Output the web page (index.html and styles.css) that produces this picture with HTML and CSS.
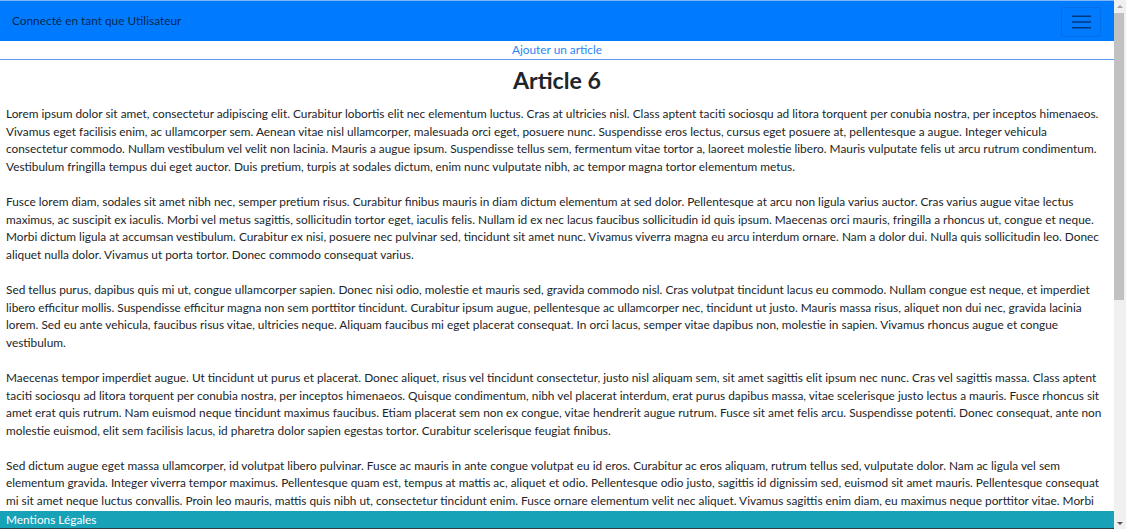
FILE: index.html
```html
<!DOCTYPE html>
<html lang="fr">
<head>
<meta charset="utf-8">
<title>Article 6</title>
<link rel="stylesheet" href="styles.css">
</head>
<body>
<div class="window">
  <div class="page">
    <nav class="navbar">
      <span class="navbar-text">Connecté en tant que Utilisateur</span>
      <button class="toggler" type="button" aria-label="Menu">
        <svg width="19" height="14" viewBox="0 0 19 14"><path d="M0 1.2H19M0 7H19M0 12.8H19" stroke="#00367a" stroke-width="1.4" fill="none"/></svg>
      </button>
    </nav>
    <div class="addbar"><a class="addlink" href="#">Ajouter un article</a></div>
    <main class="content">
      <h1 class="title">Article 6</h1>
      <p>Lorem ipsum dolor sit amet, consectetur adipiscing elit. Curabitur lobortis elit nec elementum luctus. Cras at ultricies nisl. Class aptent taciti sociosqu ad litora torquent per conubia nostra, per inceptos himenaeos.<br>Vivamus eget facilisis enim, ac ullamcorper sem. Aenean vitae nisl ullamcorper, malesuada orci eget, posuere nunc. Suspendisse eros lectus, cursus eget posuere at, pellentesque a augue. Integer vehicula<br>consectetur commodo. Nullam vestibulum vel velit non lacinia. Mauris a augue ipsum. Suspendisse tellus sem, fermentum vitae tortor a, laoreet molestie libero. Mauris vulputate felis ut arcu rutrum condimentum.<br>Vestibulum fringilla tempus dui eget auctor. Duis pretium, turpis at sodales dictum, enim nunc vulputate nibh, ac tempor magna tortor elementum metus.</p>
      <p>Fusce lorem diam, sodales sit amet nibh nec, semper pretium risus. Curabitur finibus mauris in diam dictum elementum at sed dolor. Pellentesque at arcu non ligula varius auctor. Cras varius augue vitae lectus<br>maximus, ac suscipit ex iaculis. Morbi vel metus sagittis, sollicitudin tortor eget, iaculis felis. Nullam id ex nec lacus faucibus sollicitudin id quis ipsum. Maecenas orci mauris, fringilla a rhoncus ut, congue et neque.<br>Morbi dictum ligula at accumsan vestibulum. Curabitur ex nisi, posuere nec pulvinar sed, tincidunt sit amet nunc. Vivamus viverra magna eu arcu interdum ornare. Nam a dolor dui. Nulla quis sollicitudin leo. Donec<br>aliquet nulla dolor. Vivamus ut porta tortor. Donec commodo consequat varius.</p>
      <p>Sed tellus purus, dapibus quis mi ut, congue ullamcorper sapien. Donec nisi odio, molestie et mauris sed, gravida commodo nisl. Cras volutpat tincidunt lacus eu commodo. Nullam congue est neque, et imperdiet<br>libero efficitur mollis. Suspendisse efficitur magna non sem porttitor tincidunt. Curabitur ipsum augue, pellentesque ac ullamcorper nec, tincidunt ut justo. Mauris massa risus, aliquet non dui nec, gravida lacinia<br>lorem. Sed eu ante vehicula, faucibus risus vitae, ultricies neque. Aliquam faucibus mi eget placerat consequat. In orci lacus, semper vitae dapibus non, molestie in sapien. Vivamus rhoncus augue et congue<br>vestibulum.</p>
      <p>Maecenas tempor imperdiet augue. Ut tincidunt ut purus et placerat. Donec aliquet, risus vel tincidunt consectetur, justo nisl aliquam sem, sit amet sagittis elit ipsum nec nunc. Cras vel sagittis massa. Class aptent<br>taciti sociosqu ad litora torquent per conubia nostra, per inceptos himenaeos. Quisque condimentum, nibh vel placerat interdum, erat purus dapibus massa, vitae scelerisque justo lectus a mauris. Fusce rhoncus sit<br>amet erat quis rutrum. Nam euismod neque tincidunt maximus faucibus. Etiam placerat sem non ex congue, vitae hendrerit augue rutrum. Fusce sit amet felis arcu. Suspendisse potenti. Donec consequat, ante non<br>molestie euismod, elit sem facilisis lacus, id pharetra dolor sapien egestas tortor. Curabitur scelerisque feugiat finibus.</p>
      <p>Sed dictum augue eget massa ullamcorper, id volutpat libero pulvinar. Fusce ac mauris in ante congue volutpat eu id eros. Curabitur ac eros aliquam, rutrum tellus sed, vulputate dolor. Nam ac ligula vel sem<br>elementum gravida. Integer viverra tempor maximus. Pellentesque quam est, tempus at mattis ac, aliquet et odio. Pellentesque odio justo, sagittis id dignissim sed, euismod sit amet mauris. Pellentesque consequat<br>mi sit amet neque luctus convallis. Proin leo mauris, mattis quis nibh ut, consectetur tincidunt enim. Fusce ornare elementum velit nec aliquet. Vivamus sagittis enim diam, eu maximus neque porttitor vitae. Morbi</p>
    </main>
    <footer class="footer">Mentions Légales</footer>
  </div>
  <div class="scrollbar" aria-hidden="true">
    <div class="arrow arrow-up"></div>
    <div class="track"><div class="thumb"></div></div>
    <div class="arrow arrow-down"></div>
  </div>
</div>
</body>
</html>
```
FILE: styles.css
```css
* { box-sizing: border-box; }
html, body { margin: 0; padding: 0; height: 100%; overflow: hidden; background: #fff; }
body {
  font-family: "Lato", "Segoe UI", "Liberation Sans", sans-serif;
  font-size: 11.85px;
  line-height: 17.6px;
  color: #212529;
}
.window { display: flex; height: 529px; width: 1126px; }
.page { flex: 1; display: flex; flex-direction: column; min-width: 0; }

.navbar {
  height: 41px;
  flex: none;
  background: #007bff;
  border-top: 1px solid #7fb6f7;
  display: flex;
  align-items: center;
  justify-content: space-between;
  padding: 0 13px 0 12px;
}
.navbar-text { color: rgba(0, 0, 0, 0.72); }
.toggler {
  width: 40px;
  height: 30px;
  margin-top: 1px;
  padding: 0;
  background: transparent;
  border: 1px solid rgba(0, 0, 0, 0.1);
  border-radius: 3px;
  display: flex;
  align-items: center;
  justify-content: center;
}
.toggler svg { display: block; margin-left: 1px; }

.addbar {
  flex: none;
  height: 19px;
  border-bottom: 1px solid #5a9bf0;
  text-align: center;
  line-height: 18px;
}
.addlink { color: #2b86f5; text-decoration: none; }

.content { flex: 1; overflow: hidden; padding: 0 6px; }
.title {
  margin: 6px 0 11px;
  text-align: center;
  font-size: 23.2px;
  line-height: 28px;
  font-weight: 700;
}
.content p { margin: 0 0 17.6px; white-space: nowrap; }

.footer {
  flex: none;
  height: 18px;
  background: #17a2b8;
  color: #fff;
  padding-left: 6px;
  line-height: 17px;
  border-bottom: 1px solid #2c3e44;
}

.scrollbar {
  width: 12px;
  flex: none;
  background: #f0f0f0;
  display: flex;
  flex-direction: column;
}
.arrow { height: 12px; flex: none; display: flex; align-items: center; justify-content: center; }
.arrow-up::after, .arrow-down::after {
  content: "";
  width: 0; height: 0;
  border-left: 3px solid transparent;
  border-right: 3px solid transparent;
}
.arrow-up::after { border-bottom: 3px solid #a3a3a3; }
.arrow-down::after { border-top: 3px solid #505050; }
.track { flex: 1; padding: 1px 2px 0 0; }
.thumb { height: 287px; background: #c1c1c1; }
```
